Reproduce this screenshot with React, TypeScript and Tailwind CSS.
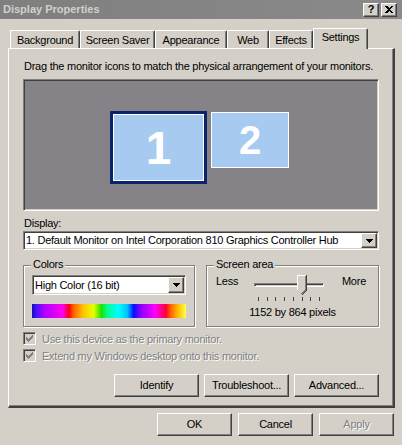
import React from 'react';

const raised =
  'border border-t-white border-l-white border-r-[#404040] border-b-[#404040] shadow-[inset_-1px_-1px_0_#808080]';
const sunken =
  'border border-t-[#808080] border-l-[#808080] border-r-white border-b-white shadow-[inset_1px_1px_0_#404040,inset_-1px_-1px_0_#d4d0c8]';
const etched = 'border border-[#808080] shadow-[inset_1px_1px_0_#fff,1px_1px_0_#fff]';
const disabledText = 'text-[#808080] [text-shadow:1px_1px_0_#fff]';

const tabs = [
  { label: 'Background', w: 'w-[70px]' },
  { label: 'Screen Saver', w: 'w-[75px]' },
  { label: 'Appearance', w: 'w-[72px]' },
  { label: 'Web', w: 'w-[42px]' },
  { label: 'Effects', w: 'w-[44px]' },
];

const DropArrow = () => (
  <div className={`w-[16px] self-stretch flex items-center justify-center bg-[#d4d0c8] ${raised}`}>
    <svg width="7" height="4" viewBox="0 0 7 4" shapeRendering="crispEdges">
      <path d="M0 0h7v1h-1v1h-1v1h-1v1h-1v-1h-1v-1h-1v-1h-1z" fill="#000" />
    </svg>
  </div>
);

const Combo = ({ text, className }: { text: string; className: string }) => (
  <div className={`flex bg-white ${sunken} ${className}`}>
    <div className="flex-1 pl-[2px] flex items-center whitespace-nowrap overflow-hidden">{text}</div>
    <div className="flex p-[1px] pl-0">
      <DropArrow />
    </div>
  </div>
);

const Check = ({ label }: { label: string }) => (
  <div className="flex items-start h-[17px]">
    <div className={`w-[13px] h-[13px] bg-[#d4d0c8] flex items-center justify-center ${sunken}`}>
      <svg width="7" height="7" viewBox="0 0 7 7" shapeRendering="crispEdges">
        <path d="M6 0h1v3h-1v1h-1v1h-1v1h-1v1h-1v-1h-1v-1h-1v-3h1v1h1v1h1v-1h1v-1h1z" fill="#808080" />
      </svg>
    </div>
    <span className={`ml-[6px] mt-[1px] ${disabledText}`}>{label}</span>
  </div>
);

const Button = ({ children, w, disabled }: { children: React.ReactNode; w: string; disabled?: boolean }) => (
  <div className={`h-[23px] ${w} flex items-center justify-center bg-[#d4d0c8] ${raised} ${disabled ? disabledText : ''}`}>
    {children}
  </div>
);

export default function App() {
  return (
    <div className="w-[402px] h-[445px] bg-[#d4d0c8] flex flex-col overflow-hidden text-[11px] leading-[13px] tracking-[-0.25px] text-black font-['Liberation_Sans',Arial,sans-serif]">
      {/* title bar */}
      <div className="h-[19px] shrink-0 flex items-center justify-between pl-[3px] pr-[5px] bg-gradient-to-r from-[#7f7f7f] to-[#8a8a8a]">
        <span className="font-bold text-[#d4d0c8] tracking-normal">Display Properties</span>
        <div className="flex gap-[2px]">
          <div className={`w-[16px] h-[14px] flex items-center justify-center bg-[#d4d0c8] font-bold text-[11px] ${raised}`}>?</div>
          <div className={`w-[16px] h-[14px] flex items-center justify-center bg-[#d4d0c8] ${raised}`}>
            <svg width="8" height="7" viewBox="0 0 8 7" shapeRendering="crispEdges">
              <path d="M0 0h2l2 2l2-2h2l-3 3.5l3 3.5h-2l-2-2l-2 2h-2l3-3.5z" fill="#000" />
            </svg>
          </div>
        </div>
      </div>

      {/* tabs */}
      <div className="mt-[9px] h-[20px] shrink-0 flex items-end pl-[10px]">
        {tabs.map((t) => (
          <div
            key={t.label}
            className={`${t.w} h-[18px] flex justify-center pt-[3px] border-l border-t border-r border-l-white border-t-white border-r-[#404040] rounded-tr-[2px] shadow-[inset_-1px_0_0_#808080]`}
          >
            {t.label}
          </div>
        ))}
        <div className="w-[55px] h-[21px] -mb-[1px] relative z-10 bg-[#d4d0c8] flex justify-center pt-[2px] border-l border-t border-r border-l-white border-t-white border-r-[#404040] rounded-tr-[2px] shadow-[inset_-1px_0_0_#808080]">
          Settings
        </div>
      </div>

      {/* panel */}
      <div className="ml-[8px] w-[387px] h-[360px] shrink-0 flex flex-col px-[14px] pt-[11px] border-l border-t border-r-2 border-b-2 border-l-white border-t-white border-r-[#404040] border-b-[#404040] shadow-[inset_-1px_-1px_0_#808080]">
        <div className="pl-[1px] whitespace-nowrap">Drag the monitor icons to match the physical arrangement of your monitors.</div>

        <div className={`mt-[6px] h-[132px] relative bg-[#858388] ${sunken}`}>
          <div className="absolute left-[86px] top-[31px] w-[97px] h-[73px] bg-[#0a246a] p-[3px]">
            <div className="w-full h-full border border-white bg-[#a6caf0] flex items-center justify-center text-white font-bold text-[46px] leading-none tracking-normal">
              1
            </div>
          </div>
          <div className="absolute left-[187px] top-[32px] w-[78px] h-[56px] border border-white bg-[#a6caf0] flex items-center justify-center text-white font-bold text-[40px] leading-none tracking-normal">
            2
          </div>
        </div>

        <div className="mt-[6px] pl-[1px]">Display:</div>
        <Combo
          className="mt-[1px] h-[19px]"
          text="1. Default Monitor on Intel Corporation 810 Graphics Controller Hub"
        />

        <div className="mt-[15px] flex gap-[11px]">
          <div className={`relative w-[172px] h-[62px] pl-[8px] pt-[9px] ${etched}`}>
            <span className="absolute -top-[8px] left-[7px] px-[2px] bg-[#d4d0c8]">Colors</span>
            <Combo className="w-[154px] h-[20px]" text="High Color (16 bit)" />
            <div className="mt-[9px] w-[154px] h-[14px] bg-[linear-gradient(to_right,#1010b0_0%,#4a10ff_3%,#b000ff_8%,#ff00f0_20%,#ff0010_24%,#ff6000_27%,#ffc000_33%,#e8ff00_40%,#20e000_45%,#00ff90_49%,#00ffff_56%,#00c0ff_62%,#0010ff_66%,#8000ff_70%,#ff00ff_80%,#ff0030_87%,#ff6000_90%,#ffc000_95%,#ffff50_100%)]" />
          </div>

          <div className={`relative flex-1 h-[62px] pt-[9px] ${etched}`}>
            <span className="absolute -top-[8px] left-[7px] px-[2px] bg-[#d4d0c8]">Screen area</span>
            <div className="grid grid-cols-[34px_78px_1fr] pl-[9px] pr-[12px]">
              <span>Less</span>
              <div className="relative h-[27px]">
                <div className={`absolute left-[4px] right-[4px] top-[8px] h-[4px] ${sunken}`} />
                <svg className="absolute left-[47px] top-0" width="10" height="21" viewBox="0 0 10 21" shapeRendering="crispEdges">
                  <path d="M0 0h10v15l-5 5l-5-5z" fill="#d4d0c8" />
                  <path d="M0.5 15V0.5H9" stroke="#fff" fill="none" />
                  <path d="M8.5 1v14l-4 4" stroke="#808080" fill="none" />
                  <path d="M9.5 0v15.5l-5 5" stroke="#404040" fill="none" />
                </svg>
                <div className="absolute left-[8px] w-[62px] top-[22px] flex justify-between">
                  {[0, 1, 2, 3, 4, 5, 6, 7].map((i) => (
                    <div key={i} className="w-[1px] h-[4px] bg-[#404040]" />
                  ))}
                </div>
              </div>
              <span className="text-right">More</span>
            </div>
            <div className="mt-[4px] text-center">1152 by 864 pixels</div>
          </div>
        </div>

        <div className="mt-[5px] flex flex-col">
          <Check label="Use this device as the primary monitor." />
          <Check label="Extend my Windows desktop onto this monitor." />
        </div>

        <div className="mt-[8px] flex justify-end gap-[5px]">
          <Button w="w-[85px]">Identify</Button>
          <Button w="w-[85px]">Troubleshoot...</Button>
          <Button w="w-[85px]">Advanced...</Button>
        </div>
      </div>

      {/* dialog buttons */}
      <div className="mt-[5px] flex justify-end gap-[6px] pr-[8px]">
        <Button w="w-[75px]">OK</Button>
        <Button w="w-[75px]">Cancel</Button>
        <Button w="w-[75px]" disabled>
          Apply
        </Button>
      </div>
    </div>
  );
}
